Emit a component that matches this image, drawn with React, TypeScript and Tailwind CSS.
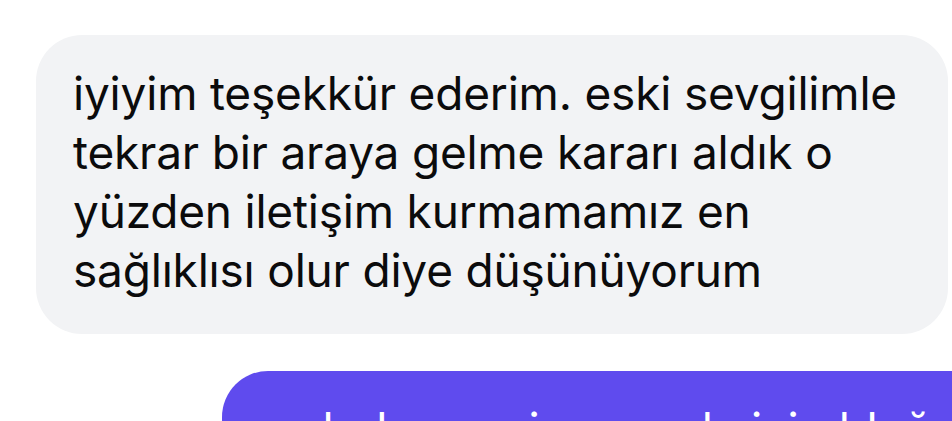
import React from 'react';

const incoming = [
  'iyiyim teşekkür ederim. eski sevgilimle',
  'tekrar bir araya gelme kararı aldık o',
  'yüzden iletişim kurmamamız en',
  'sağlıklısı olur diye düşünüyorum',
];

const App: React.FC = () => {
  return (
    <div
      className="h-[421px] w-[952px] overflow-hidden bg-white flex flex-col pt-[35px]"
      style={{ fontFamily: 'Inter, "Noto Sans", sans-serif' }}
    >
      {/* received message */}
      <div className="ml-[36px] w-[912px] rounded-[46px] bg-[#f2f3f5] pl-[37px] pr-6 pt-[29px] pb-[34px] text-[46px] leading-[59px] text-[#0b0b0c] tracking-[-0.2px]">
        {incoming.map((line) => (
          <div key={line} className="whitespace-nowrap">{line}</div>
        ))}
      </div>

      {/* sent message, cut off by the bottom edge */}
      <div className="mt-[37px] ml-[222px] w-[760px] shrink-0 rounded-tl-[46px] bg-[#5f4bee] pl-[48px] pt-[29px] pb-6 text-[46px] leading-[59px] text-white tracking-[-0.2px]">
        <div className="whitespace-nowrap">anladım seni sonunda iyi olduğuna</div>
      </div>
    </div>
  );
};

export default App;
